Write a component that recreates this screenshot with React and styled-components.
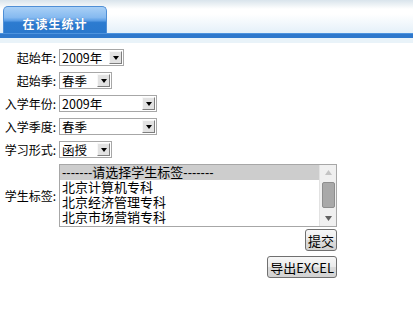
import React from "react";
import styled, { createGlobalStyle } from "styled-components";

const Global = createGlobalStyle`
  html, body { margin: 0; padding: 0; background: #ffffff; }
  body { font-family: "Noto Sans CJK SC", "Noto Sans", sans-serif; font-size: 12px; color: #000; }
`;

const Header = styled.div`
  display: flex;
  flex-direction: column;
`;

const TabBar = styled.div`
  height: 33px;
  box-sizing: border-box;
  padding: 7px 0 0 3px;
  display: flex;
  align-items: flex-end;
  background: linear-gradient(to bottom, #d9e4ec 0px, #eef3f6 5px, #ffffff 9px, #ffffff 14px, #e4f0f9 33px);
`;

const Tab = styled.div`
  width: 104px;
  height: 27px;
  box-sizing: border-box;
  border: 1px solid #4f8fd6;
  border-bottom: none;
  border-radius: 5px 5px 0 0;
  background: linear-gradient(to bottom, #a9d0f6 0%, #86baf0 40%, #5b9ee6 52%, #2c7bd0 60%, #2a78cd 100%);
  color: #ffffff;
  font-weight: bold;
  font-size: 12px;
  letter-spacing: 1px;
  display: flex;
  align-items: center;
  justify-content: center;
  padding-top: 6px;
  text-shadow: 0 0 1px #3a6fb0;
`;

const BlueLine = styled.div`
  height: 5px;
  background: linear-gradient(to bottom, #4d93de 0, #4d93de 1px, #2e78cc 1px, #2e78cc 100%);
`;

const PaleStrip = styled.div`
  height: 5px;
  background: #e9f3f9;
`;

const Form = styled.div`
  display: grid;
  grid-template-columns: 56px 278px;
  column-gap: 3px;
  row-gap: 6px;
  padding-top: 6px;
  align-items: center;
`;

const Label = styled.div`
  text-align: right;
  white-space: nowrap;
  font-size: 12px;
  line-height: 17px;
`;

const Select = styled.div`
  width: ${(p) => p.$w}px;
  height: 17px;
  box-sizing: border-box;
  border: 1px solid #a7a7a7;
  background: #fff;
  display: flex;
  align-items: stretch;
  justify-self: start;
`;

const SelectText = styled.div`
  flex: 1;
  padding-left: 2px;
  font-size: 12.5px;
  line-height: 15px;
  white-space: nowrap;
`;

const ArrowBtn = styled.div`
  width: 13px;
  margin: 1px;
  box-sizing: border-box;
  background: #e2e2e2;
  border-top: 1px solid #f8f8f8;
  border-left: 1px solid #f8f8f8;
  border-right: 1px solid #7e7e7e;
  border-bottom: 1px solid #7e7e7e;
  display: flex;
  align-items: center;
  justify-content: center;
`;

const Tri = styled.div`
  width: 0;
  height: 0;
  border-left: 3.5px solid transparent;
  border-right: 3.5px solid transparent;
  border-top: 4px solid #000;
  margin-top: 1px;
`;

const ListBox = styled.div`
  height: 63px;
  box-sizing: border-box;
  border: 1px solid #a7a7a7;
  background: #fff;
  display: flex;
  overflow: hidden;
`;

const ListItems = styled.div`
  flex: 1;
  display: flex;
  flex-direction: column;
`;

const ListItem = styled.div`
  height: 15px;
  line-height: 15px;
  padding-left: 2px;
  font-family: "Liberation Sans", "Noto Sans CJK SC", sans-serif;
  font-size: 13px;
  white-space: nowrap;
  background: ${(p) => (p.$sel ? "#cdcdcd" : "transparent")};
`;

const Scroll = styled.div`
  width: 16px;
  background: #f0f0f0;
  border-left: 1px solid #e2e2e2;
  display: flex;
  flex-direction: column;
  align-items: center;
`;

const ScrollArrow = styled.div`
  height: 15px;
  display: flex;
  align-items: center;
  justify-content: center;
`;

const Thumb = styled.div`
  width: 13px;
  height: 26px;
  box-sizing: border-box;
  background: #a9a9a9;
  border: 1px solid #8e8e8e;
  border-radius: 2px;
  margin: 2px 0;
`;

const Spacer = styled.div`
  flex: 1;
`;

const ButtonCell = styled.div`
  grid-column: 2;
  display: flex;
  justify-content: flex-end;
  margin-top: ${(p) => p.$mt || 0}px;
`;

const Button = styled.button`
  height: ${(p) => p.$h}px;
  padding: 0 2px;
  box-sizing: border-box;
  font-family: "Noto Sans CJK SC", "Noto Sans", sans-serif;
  font-size: 13px;
  color: #000;
  background: linear-gradient(to bottom, #f7f7f7 0%, #ebebeb 50%, #dcdcdc 51%, #d2d2d2 100%);
  border: 1px solid #707070;
  border-radius: 3px;
  line-height: 1;
  cursor: default;
`;

function FakeSelect({ w, value }) {
  return (
    <Select $w={w}>
      <SelectText>{value}</SelectText>
      <ArrowBtn>
        <Tri />
      </ArrowBtn>
    </Select>
  );
}

export default function App() {
  return (
    <>
      <Global />
      <Header>
        <TabBar>
          <Tab>在读生统计</Tab>
        </TabBar>
        <BlueLine />
        <PaleStrip />
      </Header>
      <Form>
        <Label>起始年:</Label>
        <FakeSelect w={65} value="2009年" />
        <Label>起始季:</Label>
        <FakeSelect w={53} value="春季" />
        <Label>入学年份:</Label>
        <FakeSelect w={98} value="2009年" />
        <Label>入学季度:</Label>
        <FakeSelect w={98} value="春季" />
        <Label>学习形式:</Label>
        <FakeSelect w={53} value="函授" />
        <Label>学生标签:</Label>
        <ListBox>
          <ListItems>
            <ListItem $sel>-------请选择学生标签-------</ListItem>
            <ListItem>北京计算机专科</ListItem>
            <ListItem>北京经济管理专科</ListItem>
            <ListItem>北京市场营销专科</ListItem>
          </ListItems>
          <Scroll>
            <ScrollArrow>
              <svg width="7" height="5" viewBox="0 0 7 5">
                <path d="M3.5 0 L7 5 L0 5 Z" fill="#c4c4c4" />
              </svg>
            </ScrollArrow>
            <Thumb />
            <Spacer />
            <ScrollArrow>
              <svg width="7" height="5" viewBox="0 0 7 5">
                <path d="M0 0 L7 0 L3.5 5 Z" fill="#606060" />
              </svg>
            </ScrollArrow>
          </Scroll>
        </ListBox>
        <ButtonCell $mt={-4}>
          <Button $h={22}>提交</Button>
        </ButtonCell>
        <ButtonCell $mt={-1}>
          <Button $h={22}>导出EXCEL</Button>
        </ButtonCell>
      </Form>
    </>
  );
}
